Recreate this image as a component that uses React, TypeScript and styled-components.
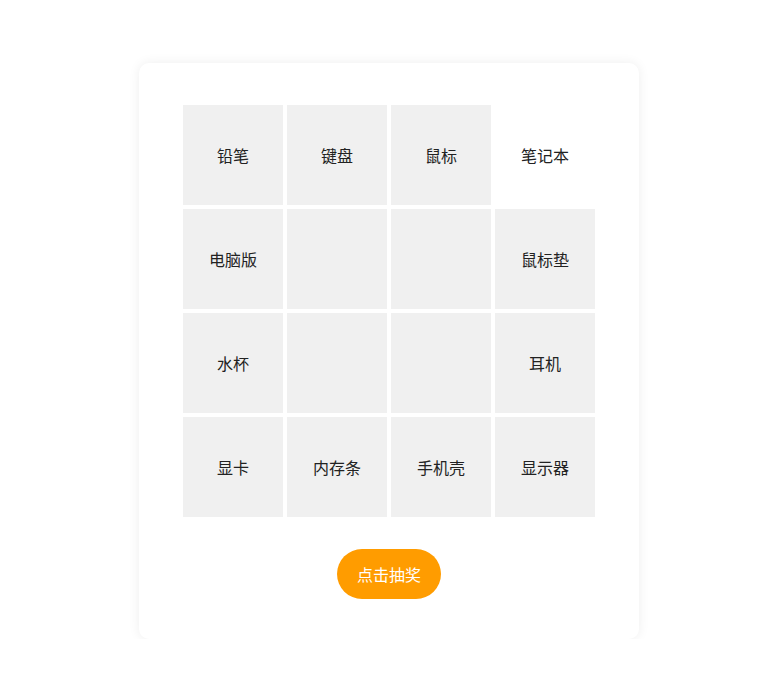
import React, { FC, useState } from "react";
import styled, { createGlobalStyle } from "styled-components";

const GlobalStyle = createGlobalStyle`
  body {
    margin: 0;
    background: #ffffff;
    font-family: "Noto Sans CJK SC", "Noto Sans", sans-serif;
    color: #222;
  }
`;

const Page = styled.div`
  display: flex;
  justify-content: center;
  padding: 63px 2px 0 0;
`;

const Card = styled.div`
  width: 500px;
  box-sizing: border-box;
  padding: 42px 44px 40px;
  background: #fff;
  border-radius: 10px;
  box-shadow: 0 0 12px rgba(0, 0, 0, 0.07);
  display: flex;
  flex-direction: column;
  align-items: center;
  gap: 32px;
`;

const Grid = styled.div`
  display: grid;
  grid-template-columns: repeat(4, 100px);
  grid-template-rows: repeat(4, 100px);
  gap: 4px;
`;

const Cell = styled.div<{ $active?: boolean; $empty?: boolean }>`
  display: flex;
  align-items: center;
  justify-content: center;
  font-size: 16px;
  color: #222;
  background: ${(p) => (p.$active ? "#ffffff" : "#f0f0f0")};
`;

const DrawButton = styled.button`
  width: 104px;
  height: 50px;
  border: none;
  border-radius: 25px;
  background: #ff9c00;
  color: #fff;
  font-family: inherit;
  font-size: 16px;
  cursor: pointer;
`;

const layout: (string | null)[] = [
  "铅笔", "键盘", "鼠标", "笔记本",
  "电脑版", null, null, "鼠标垫",
  "水杯", null, null, "耳机",
  "显卡", "内存条", "手机壳", "显示器",
];

const App: FC = () => {
  const [active] = useState(3);
  return (
    <>
      <GlobalStyle />
      <Page>
        <Card>
          <Grid>
            {layout.map((name, idx) => (
              <Cell key={idx} $active={idx === active} $empty={name === null}>
                {name}
              </Cell>
            ))}
          </Grid>
          <DrawButton>点击抽奖</DrawButton>
        </Card>
      </Page>
    </>
  );
};

export default App;
